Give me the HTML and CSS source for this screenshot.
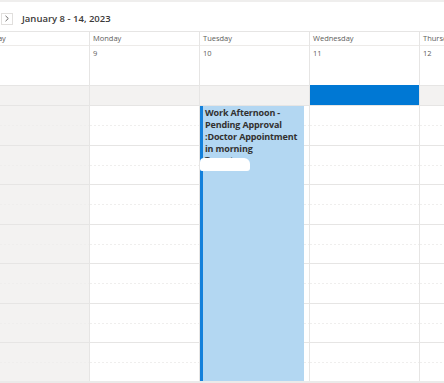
FILE: index.html
```html
<!DOCTYPE html>
<html>
<head>
<meta charset="utf-8">
<link rel="stylesheet" href="styles.css">
</head>
<body>
<div class="page">
  <div class="topstrip"></div>
  <div class="toolbar">
    <button class="nav-btn" aria-label="Next week">
      <svg width="6" height="7" viewBox="0 0 6 7"><path d="M1.5 0.8 L4.3 3.5 L1.5 6.2" fill="none" stroke="#605e5c" stroke-width="0.9"/></svg>
    </button>
    <span class="title">January 8 - 14, 2023</span>
  </div>
  <div class="grid">
    <div class="col col-off">
      <div class="day-name day-name-first">Sunday</div>
      <div class="day-num"></div>
      <div class="allday"></div>
      <div class="slots">
        <div class="slot"></div><div class="slot"></div><div class="slot"></div><div class="slot"></div><div class="slot"></div><div class="slot"></div><div class="slot"></div>
      </div>
    </div>
    <div class="col">
      <div class="day-name">Monday</div>
      <div class="day-num">9</div>
      <div class="allday"></div>
      <div class="slots">
        <div class="slot"></div><div class="slot"></div><div class="slot"></div><div class="slot"></div><div class="slot"></div><div class="slot"></div><div class="slot"></div>
      </div>
    </div>
    <div class="col">
      <div class="day-name">Tuesday</div>
      <div class="day-num">10</div>
      <div class="allday"></div>
      <div class="slots">
        <div class="slot"></div><div class="slot"></div><div class="slot"></div><div class="slot"></div><div class="slot"></div><div class="slot"></div><div class="slot"></div>
        <div class="event">
          <div class="event-title">Work Afternoon - Pending Approval :Doctor Appointment in morning</div>
          <div class="event-sub"><span class="event-sub-text">Tentative</span><span class="redact"></span></div>
        </div>
      </div>
    </div>
    <div class="col">
      <div class="day-name">Wednesday</div>
      <div class="day-num">11</div>
      <div class="allday allday-selected"></div>
      <div class="slots">
        <div class="slot"></div><div class="slot"></div><div class="slot"></div><div class="slot"></div><div class="slot"></div><div class="slot"></div><div class="slot"></div>
      </div>
    </div>
    <div class="col">
      <div class="day-name">Thursday</div>
      <div class="day-num">12</div>
      <div class="allday"></div>
      <div class="slots">
        <div class="slot"></div><div class="slot"></div><div class="slot"></div><div class="slot"></div><div class="slot"></div><div class="slot"></div><div class="slot"></div>
      </div>
    </div>
  </div>
  <div class="footer"></div>
</div>
</body>
</html>
```

FILE: styles.css
```css
html, body {
  margin: 0;
  padding: 0;
  background: #ffffff;
}
body {
  font-family: "Open Sans", "Noto Sans", sans-serif;
  color: #323130;
  width: 444px;
  height: 383px;
  overflow: hidden;
}
.page {
  width: 444px;
  height: 383px;
  overflow: hidden;
  display: flex;
  flex-direction: column;
}
.topstrip {
  height: 2px;
  background: #efeeed;
  flex: none;
}
.toolbar {
  height: 29px;
  flex: none;
  display: flex;
  align-items: center;
  padding-left: 1px;
  gap: 9px;
}
.nav-btn {
  width: 12px;
  height: 12px;
  padding: 0;
  margin: 0;
  border: 1px solid #e1dfdd;
  background: #fff;
  display: flex;
  align-items: center;
  justify-content: center;
  box-sizing: border-box;
  margin-top: 4px;
}
.title {
  font-size: 9.5px;
  font-weight: 600;
  color: #3b3a39;
  margin-top: 3px;
}
.grid {
  display: flex;
  margin-left: -20px;
  flex: none;
  height: 349px;
  border-top: 1px solid #e6e5e4;
}
.col {
  width: 110px;
  flex: none;
  display: flex;
  flex-direction: column;
  border-right: 1px solid #e6e5e4;
  box-sizing: border-box;
}
.day-name {
  height: 13px;
  font-size: 7.5px;
  line-height: 13px;
  color: #605e5c;
  padding-left: 3px;
  border-bottom: 1px solid #edebe9;
  white-space: nowrap;
  overflow: hidden;
}
.day-name-first {
  padding-left: 0;
}
.day-num {
  height: 39px;
  font-size: 7.5px;
  line-height: 14px;
  color: #605e5c;
  padding-left: 3px;
}
.allday {
  height: 19px;
  background: #f3f2f1;
  border-top: 1px solid #e6e5e4;
  border-bottom: 1px solid #e6e5e4;
}
.allday-selected {
  background: #0078d4;
  border-top-color: #0078d4;
  border-bottom-color: #e6e5e4;
}
.slots {
  position: relative;
  flex: 1;
  overflow: hidden;
}
.col-off .slots {
  background: #f3f2f1;
}
.slot {
  height: 39.5px;
  box-sizing: border-box;
  border-bottom: 1px solid #e6e5e4;
  background-image: linear-gradient(to right, #efeeed 50%, transparent 50%);
  background-size: 4px 1px;
  background-repeat: repeat-x;
  background-position: 0 19px;
}
.event {
  position: absolute;
  left: 0;
  top: -1px;
  width: 104px;
  bottom: 0;
  background: #b3d7f2;
  border-left: 3px solid #1380db;
  box-sizing: border-box;
  padding: 2px 0 0 2px;
}
.event-title {
  font-size: 9px;
  font-weight: 700;
  letter-spacing: -0.15px;
  line-height: 12px;
  color: #323130;
}
.event-sub {
  position: relative;
  height: 14px;
  font-size: 8.5px;
  line-height: 12px;
}
.event-sub-text {
  color: #323130;
}
.redact {
  position: absolute;
  left: -5px;
  top: 3px;
  width: 50px;
  height: 13px;
  background: #ffffff;
  border-radius: 4px 6px 3px 2px;
}
.footer {
  height: 3px;
  flex: none;
  background: #ebeae9;
}
```
